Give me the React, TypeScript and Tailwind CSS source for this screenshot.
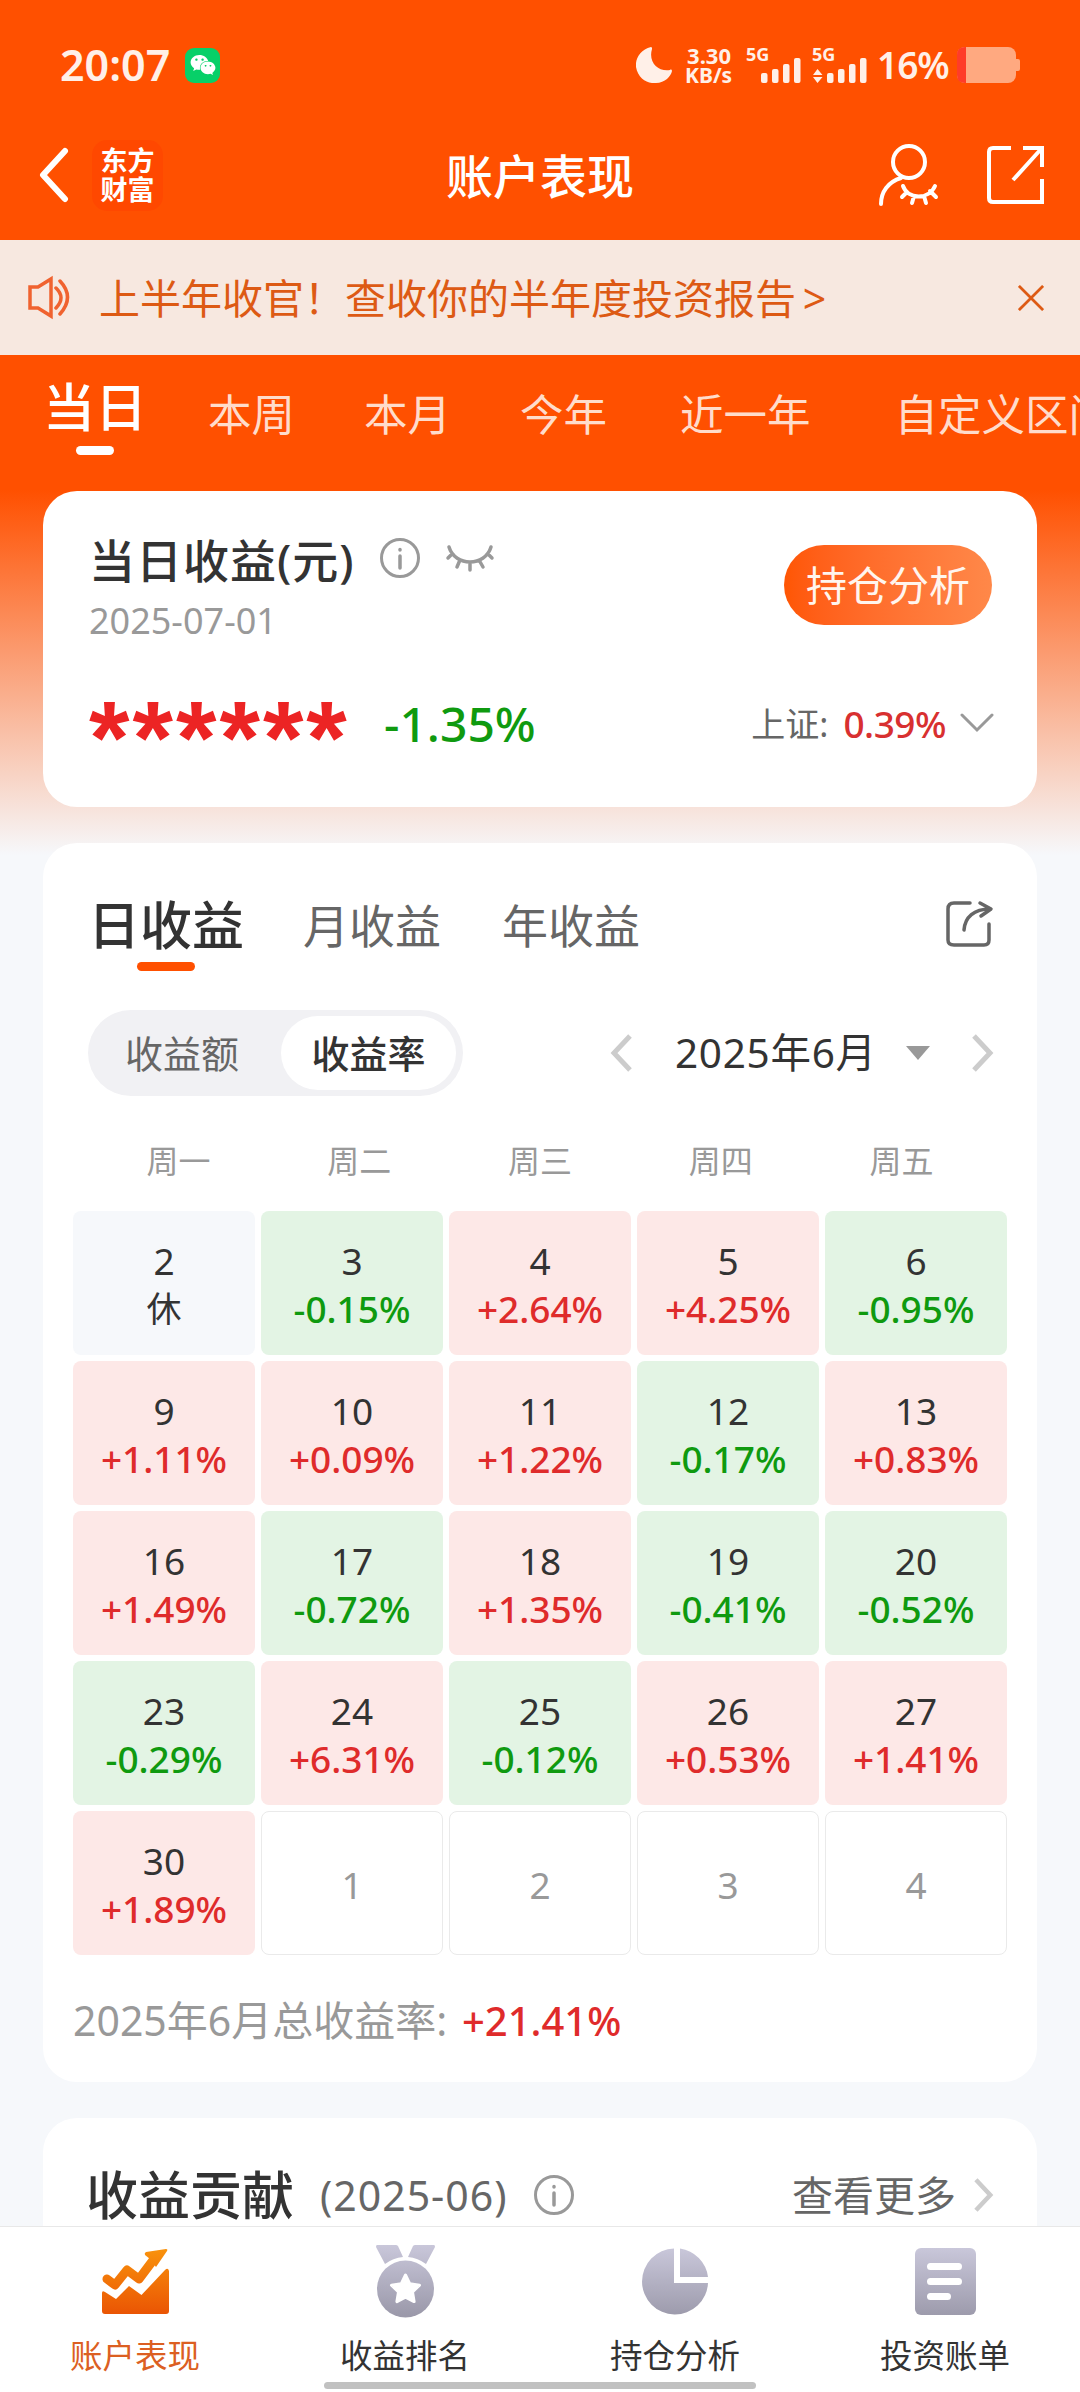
import { FaWeixin } from "react-icons/fa";

type Kind = "up" | "down" | "rest" | "empty";

interface DayCell {
  day: number;
  value?: string;
  kind: Kind;
}

const PERIODS = [
  { label: "本周", gap: "ml-[61px]" },
  { label: "本月", gap: "ml-[69px]" },
  { label: "今年", gap: "ml-[69px]" },
  { label: "近一年", gap: "ml-[73px]" },
  { label: "自定义区间", gap: "ml-[84px]" },
];

const WEEKDAYS = ["周一", "周二", "周三", "周四", "周五"];

const DAYS: DayCell[] = [
  { day: 2, value: "休", kind: "rest" },
  { day: 3, value: "-0.15%", kind: "down" },
  { day: 4, value: "+2.64%", kind: "up" },
  { day: 5, value: "+4.25%", kind: "up" },
  { day: 6, value: "-0.95%", kind: "down" },
  { day: 9, value: "+1.11%", kind: "up" },
  { day: 10, value: "+0.09%", kind: "up" },
  { day: 11, value: "+1.22%", kind: "up" },
  { day: 12, value: "-0.17%", kind: "down" },
  { day: 13, value: "+0.83%", kind: "up" },
  { day: 16, value: "+1.49%", kind: "up" },
  { day: 17, value: "-0.72%", kind: "down" },
  { day: 18, value: "+1.35%", kind: "up" },
  { day: 19, value: "-0.41%", kind: "down" },
  { day: 20, value: "-0.52%", kind: "down" },
  { day: 23, value: "-0.29%", kind: "down" },
  { day: 24, value: "+6.31%", kind: "up" },
  { day: 25, value: "-0.12%", kind: "down" },
  { day: 26, value: "+0.53%", kind: "up" },
  { day: 27, value: "+1.41%", kind: "up" },
  { day: 30, value: "+1.89%", kind: "up" },
  { day: 1, kind: "empty" },
  { day: 2, kind: "empty" },
  { day: 3, kind: "empty" },
  { day: 4, kind: "empty" },
];

const CELL_BG: Record<Kind, string> = {
  up: "bg-[#fde8e7]",
  down: "bg-[#e3f4e4]",
  rest: "bg-[#f6f8fb]",
  empty: "border border-[#eaeaea]",
};

const CELL_TEXT: Record<Kind, string> = {
  up: "font-medium text-[#df2b2b]",
  down: "font-medium text-[#0f9a0f]",
  rest: "text-[35px] text-[#333]",
  empty: "text-[#999]",
};

export default function App() {
  return (
    <div className="w-[1080px] h-[2392px] overflow-hidden flex flex-col bg-[linear-gradient(to_bottom,#ff5000_490px,#f6f8fb_855px)] font-['Noto_Sans','Noto_Sans_CJK_SC',sans-serif] text-[#333] whitespace-nowrap">
      <StatusBar />
      <Header />
      <Banner />
      <PeriodTabs />
      <main className="flex-1 min-h-0 overflow-hidden px-[43px] flex flex-col gap-9">
        <TodayCard />
        <CalendarCard />
        <ContributionCard />
      </main>
      <BottomNav />
    </div>
  );
}

function StatusBar() {
  return (
    <div className="h-[110px] pt-5 pl-[60px] pr-[60px] flex items-center shrink-0 text-[#fff0e8]">
      <span className="w-[125px] text-[43px] leading-[60px] font-semibold">20:07</span>
      <span className="w-[35px] h-[35px] rounded-[9px] bg-[#07d068] flex items-center justify-center">
        <FaWeixin className="w-[26px] h-[26px] text-white" />
      </span>
      <svg className="ml-auto w-9 h-9" viewBox="0 0 36 36" fill="currentColor">
        <path d="M15 0C4 3-1 12 0 20c2 12 12 17 20 16 9 0 15-7 16-12 0-1-1-2-2-1-12 2-22-8-18-21 0-1 0-2-1-2z" />
      </svg>
      <div className="w-[46px] ml-[13px] text-right font-bold text-[21px] leading-5">
        <div className="text-[22px] -mt-px">3.30</div>
        <div>KB/s</div>
      </div>
      <Signal className="ml-[15px]" />
      <Signal className="ml-[10px]" arrows />
      <span className="ml-[9px] w-[80px] text-[37px] leading-[50px] font-semibold tracking-[-1px]">16%</span>
      <svg className="w-[63px] h-9" viewBox="0 0 63 36">
        <rect x="0" y="0" width="59" height="36" rx="8" fill="#ffa980" />
        <path d="M59 12h2q2 0 2 2v8q0 2-2 2h-2z" fill="#ffa980" />
        <path d="M9 0H8Q0 0 0 8v20q0 8 8 8h1z" fill="#ff3c28" />
      </svg>
    </div>
  );
}

function Signal({ className, arrows }: { className: string; arrows?: boolean }) {
  return (
    <div className={`relative w-[56px] h-9 ${className}`}>
      <span className="absolute left-0 -top-[3px] text-[18px] leading-5 font-bold">5G</span>
      <svg className="w-[56px] h-9" viewBox="0 0 56 36" fill="currentColor">
        <rect x="15" y="26" width="6.5" height="10" rx="2" />
        <rect x="26" y="22" width="6.5" height="14" rx="2" />
        <rect x="37" y="17" width="6.5" height="19" rx="2" />
        <rect x="48" y="11" width="6.5" height="25" rx="2" />
        {arrows && <path d="M5.500 22l5 6H1zM5.500 36l5-6H1z" />}
      </svg>
    </div>
  );
}

function Header() {
  return (
    <header className="relative h-[130px] shrink-0 pl-[37px] pr-[34px] flex items-center text-white">
      <svg className="w-8 h-[56px]" viewBox="0 0 32 56" fill="none" stroke="currentColor" strokeWidth="6" strokeLinecap="round" strokeLinejoin="round">
        <path d="M28 4L6 28l22 24" />
      </svg>
      <div className="ml-[23px] w-[71px] h-[71px] rounded-[15px] bg-[#ff4800] flex flex-col items-center justify-center text-[27px] leading-[29px] font-bold">
        <span>东方</span>
        <span>财富</span>
      </div>
      <h1 className="absolute left-0 right-0 top-[36px] text-center text-[47px] leading-[60px] font-medium pointer-events-none">账户表现</h1>
      <svg className="ml-auto w-16 h-16" viewBox="0 0 64 64" fill="none" stroke="currentColor" strokeWidth="4" strokeLinecap="round">
        <circle cx="33" cy="19" r="16" />
        <path d="M25 35C12 39 5 49 5 61" />
        <path d="M27 43c5 14 26 14 32 0M31 49l-5 5M38 53l-2 7M48 53l2 7M54 48l6 6" />
      </svg>
      <svg className="ml-[45px] w-[61px] h-[62px]" viewBox="0 0 61 62" fill="none" stroke="currentColor" strokeWidth="4">
        <path d="M26 4H8Q4 4 4 8v46q0 4 4 4h49V35M38 4h19v19M57 4L28 36" />
      </svg>
    </header>
  );
}

function Banner() {
  return (
    <div className="h-[115px] shrink-0 bg-[#f7e8e0] pl-[26px] pr-[36px] flex items-center text-[#dd5a14]">
      <svg className="w-[46px] h-[46px]" viewBox="0 0 46 46" fill="none" stroke="#f0622f" strokeWidth="3.500" strokeLinecap="round">
        <path d="M4 12h8l13-8v37l-13-8H4zM30 13q10 9.500 0 20M34 6q15 16 0 33" />
      </svg>
      <span className="ml-[27px] text-[41px] leading-[56px] [word-spacing:-4px]">上半年收官！查收你的半年度投资报告 &gt;</span>
      <svg className="ml-auto w-[26px] h-[26px]" viewBox="0 0 28 28" fill="none" stroke="currentColor" strokeWidth="3">
        <path d="M1 1l26 26M27 1L1 27" />
      </svg>
    </div>
  );
}

function PeriodTabs() {
  return (
    <div className="h-[136px] shrink-0 pl-[43px] flex overflow-hidden text-[#ffdccb]">
      <div className="pt-[20px] flex flex-col items-center text-white">
        <span className="text-[52px] leading-[64px] font-medium">当日</span>
        <span className="mt-[7px] w-[38px] h-[9px] rounded-full bg-white" />
      </div>
      {PERIODS.map((p) => (
        <span key={p.label} className={`pt-[31px] text-[43.5px] leading-[56px] shrink-0 ${p.gap}`}>
          {p.label}
        </span>
      ))}
    </div>
  );
}

function InfoIcon({ className }: { className: string }) {
  return (
    <svg className={`w-10 h-10 ${className}`} viewBox="0 0 40 40" fill="none" stroke="#999" strokeWidth="3" strokeLinecap="round">
      <circle cx="20" cy="20" r="18.500" />
      <path d="M20 18v12M20 11.500v.5" strokeWidth="3.500" />
    </svg>
  );
}

function TodayCard() {
  return (
    <section className="h-[316px] shrink-0 rounded-[34px] bg-white pl-[46px] pr-[43px]">
      <div className="flex">
        <div className="pt-[38px]">
          <div className="flex items-center">
            <h2 className="text-[46px] leading-[62px] font-medium tracking-[1px]">当日收益(元)</h2>
            <InfoIcon className="ml-[25px] -mt-1" />
            <svg className="ml-[25px] -mt-1 w-[50px] h-[30px]" viewBox="0 0 50 30" fill="none" stroke="#999" strokeWidth="3.500" strokeLinecap="round">
              <path d="M4 4c6 20 36 20 42 0M7 11l-4 4M15 17l-3 7M25 19v8M34 17l4 7M43 11l4 4" />
            </svg>
          </div>
          <div className="text-[36px] leading-[52px] mt-[4px] text-[#999]">2025-07-01</div>
        </div>
        <button className="ml-auto mr-[2px] mt-[54px] w-[208px] h-20 rounded-full bg-linear-to-r from-[#ff5603] to-[#ff8849] text-[41px] leading-[56px] text-[#fff5ee]">
          持仓分析
        </button>
      </div>
      <div className="mt-[42px] h-[70px] flex items-center">
        <span className="h-[70px] w-[295px] pt-[36px] font-['Liberation_Sans',sans-serif] text-[104px] leading-[70px] -mt-[44px] font-bold tracking-[3px] text-[#ec2424]">******</span>
        <span className="text-[48px] leading-[70px] font-medium text-[#0f9a0f]">-1.35%</span>
        <span className="ml-auto text-[34px] leading-[70px] text-[#666]">上证:</span>
        <span className="ml-[15px] text-[37px] leading-[70px] font-medium tracking-[-0.5px] text-[#d83030]">0.39%</span>
        <svg className="ml-[14px] w-[34px] h-5 -mt-[2px]" viewBox="0 0 34 20" fill="none" stroke="#999" strokeWidth="3" strokeLinecap="round">
          <path d="M2 2l15 15L32 2" />
        </svg>
      </div>
    </section>
  );
}

function Chevron({ className, left }: { className: string; left?: boolean }) {
  return (
    <svg className={className} viewBox="0 0 22 38" fill="none" stroke="#ccc" strokeWidth="5">
      <path d={left ? "M20 2L4 19l16 17" : "M2 2l16 17L2 36"} />
    </svg>
  );
}

function CalendarCard() {
  return (
    <section className="h-[1239px] shrink-0 rounded-[34px] bg-white">
      <div className="h-[167px] pl-[45px] pr-[43px] pt-[51px] flex">
        <div className="flex flex-col items-center">
          <span className="text-[52px] leading-[62px] font-medium">日收益</span>
          <span className="mt-[6px] w-[58px] h-[9px] rounded-full bg-[#ff5000]" />
        </div>
        <span className="ml-[59px] text-[46px] leading-[62px] text-[#666]">月收益</span>
        <span className="ml-[61px] text-[46px] leading-[62px] text-[#666]">年收益</span>
        <svg className="ml-auto mt-[5px] w-[50px] h-[50px]" viewBox="0 0 50 50" fill="none" stroke="#666" strokeWidth="3.500" strokeLinecap="round" strokeLinejoin="round">
          <path d="M26 4H10Q4 4 4 10v31q0 5 6 5h30q5 0 5-5V25M20 31c1-13 10-21 26-21M36 4l11 6-10 7" />
        </svg>
      </div>

      <div className="h-[86px] pl-[45px] pr-[43px] flex items-center">
        <div className="w-[375px] h-[86px] rounded-full bg-[#f1f1f4] flex items-center text-[38px] leading-[50px]">
          <span className="w-[193px] pl-[37px] text-[#666]">收益额</span>
          <span className="w-[175px] h-[74px] rounded-full bg-white flex items-center justify-center font-medium">收益率</span>
        </div>
        <Chevron left className="ml-[147px] w-[22px] h-[38px]" />
        <span className="ml-[43px] text-[40.5px] leading-[56px] tracking-[0.700px]">2025年6月</span>
        <svg className="ml-auto w-6 h-[14px]" viewBox="0 0 24 14" fill="#999">
          <path d="M0 0h24L12 14z" />
        </svg>
        <Chevron className="ml-[42px] w-[22px] h-[38px]" />
      </div>

      <div className="mt-[41px] h-[48px] mx-[45px] grid grid-cols-5 text-center text-[32px] leading-[48px] text-[#999]">
        {WEEKDAYS.map((d) => (
          <span key={d}>{d}</span>
        ))}
      </div>

      <div className="mt-[26px] mx-[30px] grid grid-cols-5 gap-[6px]">
        {DAYS.map((cell, i) => (
          <div
            key={i}
            className={`h-36 pt-1 rounded-lg flex flex-col items-center justify-center text-[37px] leading-[48px] ${CELL_BG[cell.kind]}`}
          >
            <span className={cell.kind === "empty" ? "text-[#999]" : "text-[#333]"}>{cell.day}</span>
            {cell.value && <span className={CELL_TEXT[cell.kind]}>{cell.value}</span>}
          </div>
        ))}
      </div>

      <div className="mt-[37px] pl-[30px] text-[41px] leading-[56px] text-[#999]">
        2025年6月总收益率: <span className="ml-1 text-[40px] font-medium text-[#df2b2b]">+21.41%</span>
      </div>
    </section>
  );
}

function ContributionCard() {
  return (
    <section className="h-[400px] shrink-0 rounded-[34px] bg-white pl-[43px] pr-[43px] pt-[45px]">
      <div className="h-[64px] flex items-center">
        <h2 className="text-[52px] leading-[64px] font-medium">收益贡献</h2>
        <span className="ml-[26px] text-[41px] leading-[64px] tracking-[1px] text-[#666]">(2025-06)</span>
        <InfoIcon className="ml-[26px]" />
        <span className="ml-auto text-[41px] leading-[64px] text-[#666]">查看更多</span>
        <Chevron className="ml-[18px] w-5 h-[34px]" />
      </div>
    </section>
  );
}

function ChartIcon() {
  return (
    <svg className="w-[67px] h-[65px]" viewBox="0 0 67 65">
      <defs>
        <linearGradient id="orange" gradientUnits="userSpaceOnUse" x1="0" y1="0" x2="0" y2="65">
          <stop offset="0" stopColor="#f9920c" />
          <stop offset="1" stopColor="#ea5504" />
        </linearGradient>
      </defs>
      <path d="M5 30l8 6 12-15 12 9 15-20" fill="none" stroke="url(#orange)" strokeWidth="9" strokeLinecap="round" strokeLinejoin="round" />
      <path d="M44 3l20-3q2 0 1 2L54 18l-6-8-5-4q-1-2 1-3z" fill="url(#orange)" />
      <path d="M0 44q0-3 3-1l11 7 13-13 12.500 9L63 21q3-3 4 1v40q0 3-3 3H3q-3 0-3-3z" fill="url(#orange)" />
    </svg>
  );
}

function PurpleGradient({ id }: { id: string }) {
  return (
    <defs>
      <linearGradient id={id} gradientUnits="userSpaceOnUse" x1="0" y1="0" x2="0" y2="70">
        <stop offset="0" stopColor="#c9c7da" />
        <stop offset="1" stopColor="#9b99aa" />
      </linearGradient>
    </defs>
  );
}

function MedalIcon() {
  return (
    <svg className="w-[59px] h-[73px]" viewBox="0 0 59 73">
      <PurpleGradient id="medal" />
      <path d="M1 0h19q1 0 2 1l5 11q-10 1-18 7L0 2q0-2 1-2zM58 0H39q-1 0-2 1l-5 11q10 1 18 7l9-17q0-2-1-2z" fill="url(#medal)" />
      <circle cx="29.500" cy="44" r="28.500" fill="url(#medal)" />
      <path d="M29.500 30l4.300 8.800 9.700 1.400-7 6.800 1.600 9.600-8.600-4.500-8.600 4.500 1.600-9.600-7-6.800 9.700-1.400z" fill="#fff" stroke="#fff" strokeWidth="3" strokeLinejoin="round" />
    </svg>
  );
}

function PieIcon() {
  return (
    <svg className="w-[67px] h-[67px]" viewBox="0 0 67 67">
      <PurpleGradient id="pie" />
      <path d="M32 0.500A33 33 0 1 0 66 35H32zM38 0.500A33 33 0 0 1 66 29H38z" fill="url(#pie)" />
    </svg>
  );
}

function BillIcon() {
  return (
    <svg className="w-[61px] h-[67px]" viewBox="0 0 61 67">
      <PurpleGradient id="bill" />
      <rect width="61" height="67" rx="6" fill="url(#bill)" />
      <path d="M15.500 18.500h28M15.500 33.500h28M15.500 48.500h17" stroke="#fff" strokeWidth="7" strokeLinecap="round" />
    </svg>
  );
}

const NAV = [
  { label: "账户表现", icon: <ChartIcon />, active: true },
  { label: "收益排名", icon: <MedalIcon /> },
  { label: "持仓分析", icon: <PieIcon /> },
  { label: "投资账单", icon: <BillIcon /> },
];

function BottomNav() {
  return (
    <nav className="relative h-[166px] shrink-0 bg-white border-t border-[#e8e8e8] grid grid-cols-4">
      {NAV.map((item) => (
        <div key={item.label} className="pt-[17px] flex flex-col items-center">
          <div className="h-[75px] flex items-center">{item.icon}</div>
          <span className={`mt-[15px] text-[32.5px] leading-[44px] ${item.active ? "text-[#dc5f22]" : "text-[#333]"}`}>
            {item.label}
          </span>
        </div>
      ))}
      {/* Home indicator */}
      <span className="absolute left-[324px] bottom-[3px] w-[432px] h-[7px] rounded-full bg-[#c1c1c1]" />
    </nav>
  );
}
